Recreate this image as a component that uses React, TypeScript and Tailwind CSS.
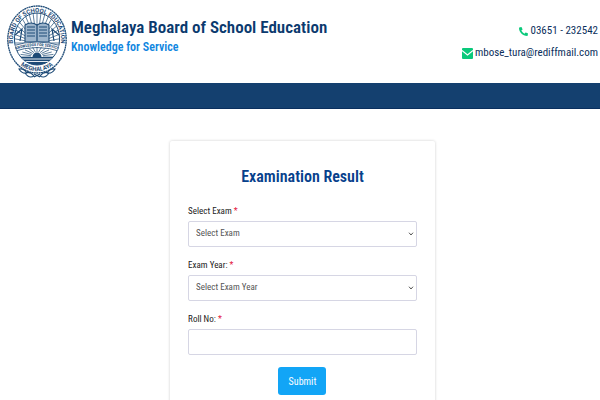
import React from "react";
import { FaPhoneAlt } from "react-icons/fa";

const INK = "#1d4a76";

const rays = Array.from({ length: 21 }, (_, i) => Math.PI + (i * Math.PI) / 20);
const sunRays = Array.from({ length: 13 }, (_, i) => Math.PI + (i * Math.PI) / 12);

const Seal = () => {
  return (
    <svg
      viewBox="0 0 60 73"
      className="h-[73px] w-[60px] shrink-0"
      fill="none"
      stroke={INK}
      role="img"
      aria-label="Board seal"
    >
      <defs>
        <path id="ring-top" d="M8 46 A24 27.6 0 1 1 52 46" />
        <path id="ring-bottom" d="M5 48.5 A28 32 0 0 0 55 48.5" />
        <path id="ribbon" d="M8 45 Q30 37 52 45" />
        <clipPath id="inner">
          <ellipse cx="30" cy="34" rx="22.5" ry="26" />
        </clipPath>
      </defs>
      <ellipse cx="30" cy="34.5" rx="29.2" ry="33.5" strokeWidth="1.3" strokeDasharray="2 .4" />
      <ellipse cx="30" cy="34" rx="22.6" ry="26" strokeWidth="1" />
      <g clipPath="url(#inner)">
        {rays.map((a) => (
          <path
            key={a}
            strokeWidth=".7"
            d={`M${30 + 12 * Math.cos(a)} ${38 + 14 * Math.sin(a)} L${30 + 26 * Math.cos(a)} ${38 + 31 * Math.sin(a)}`}
          />
        ))}
        <path d="M8 30 L15 24 L13 36 M52 30 L45 24 L47 36" strokeWidth="1.2" />
        <path d="M18 20 Q24 16 30 20 Q36 16 42 20 V37 H18 Z" fill="#9db5cc" strokeWidth="1.1" />
        <path d="M30 20 V36" strokeWidth="1.2" />
        <path
          d="M20 22 h8 M20 25 h8 M20 28 h8 M20 31 h8 M32 22 h8 M32 25 h8 M32 28 h8 M32 31 h8"
          strokeWidth="1"
        />
        <path d="M5 41 Q30 33 55 41 V47 Q30 38 5 47 Z" fill="#fff" strokeWidth=".8" />
        {sunRays.map((a) => (
          <path
            key={a}
            strokeWidth=".7"
            d={`M${30 + 6 * Math.cos(a)} ${52 + 5 * Math.sin(a)} L${30 + 17 * Math.cos(a)} ${52 + 10 * Math.sin(a)}`}
          />
        ))}
        <path d="M25.5 52 A4.5 4.5 0 0 1 34.5 52 Z" fill={INK} stroke="none" />
        <path d="M5 52 H55 V64 H5 Z" fill={INK} stroke="none" />
        <path d="M13 54 h34 M17 56.5 h26" stroke="#fff" strokeWidth=".9" />
      </g>
      <path
        d="M12 64 q5 -1 8 4 q-5 1 -8 -4 Z M48 64 q-5 -1 -8 4 q5 1 8 -4 Z M18 68 q5 -2 9 3 q-5 3 -9 -3 Z M42 68 q-5 -2 -9 3 q5 3 9 -3 Z M27 69 l6 3 M33 69 l-6 3"
        strokeWidth="1.1"
      />
      <g
        fill={INK}
        stroke="none"
        fontFamily="Roboto, sans-serif"
        fontWeight="700"
        textAnchor="middle"
      >
        <text fontSize="6">
          <textPath href="#ring-top" startOffset="50%">
            BOARD OF SCHOOL EDUCATION
          </textPath>
        </text>
        <text fontSize="4" fontFamily="'Roboto Condensed', Roboto, sans-serif">
          <textPath href="#ribbon" startOffset="50%">
            KNOWLEDGE FOR SERVICE
          </textPath>
        </text>
        <text fontSize="6">
          <textPath href="#ring-bottom" startOffset="50%">
            MEGHALAYA
          </textPath>
        </text>
      </g>
    </svg>
  );
};

const MailIcon = () => {
  return (
    <svg viewBox="0 0 11 11" className="size-[11px]" aria-hidden="true">
      <rect width="11" height="11" rx="1" fill="#0ac97b" />
      <path d="M0 2.5 L5.5 7 L11 2.5" fill="none" stroke="#fff" strokeWidth="1.1" />
    </svg>
  );
};

type FieldProps = {
  id: string;
  label: string;
  children: React.ReactNode;
};

const Field = ({ id, label, children }: FieldProps) => {
  return (
    <div className="flex flex-col gap-1">
      <label htmlFor={id} className="text-[9px] leading-3 text-[#222]">
        {label} <span className="text-[#e3173e]">*</span>
      </label>
      {children}
    </div>
  );
};

const SelectBox = ({ id, placeholder }: { id: string; placeholder: string }) => {
  return (
    <div className="grid items-center">
      <select
        id={id}
        className="col-start-1 row-start-1 h-[26px] w-full appearance-none rounded-xs border border-[#d6d6e4] bg-white px-[7px] text-[9px] text-[#555]"
      >
        <option>{placeholder}</option>
      </select>
      <svg
        viewBox="0 0 6 4"
        className="pointer-events-none col-start-1 row-start-1 mr-[3px] h-1 w-[6px] justify-self-end"
        fill="none"
        stroke="#555"
        strokeWidth="1"
      >
        <path d="M1 .7 L3 3 L5 .7" />
      </svg>
    </div>
  );
};

const App = () => {
  return (
    <div className="min-h-screen bg-white font-['Roboto_Condensed',Roboto,sans-serif]">
      <header className="flex items-start justify-between pt-[5px] pr-[2px] pb-[5px] pl-[7px]">
        <div className="flex gap-1">
          <Seal />
          <div className="pt-3">
            <h1 className="text-[17px] leading-5 font-semibold text-[#0b3a6e]">
              Meghalaya Board of School Education
            </h1>
            <p className="text-[12px] leading-5 font-semibold text-[#0f86e0]">
              Knowledge for Service
            </p>
          </div>
        </div>
        <div className="flex flex-col items-end gap-[6px] pt-[18px] text-[11px] leading-4 text-[#0b2f5c]">
          <a href="tel:03651232542" className="flex items-center gap-[2px]">
            <FaPhoneAlt className="size-[9px] text-[#0ac97b]" />
            03651 - 232542
          </a>
          <a href="mailto:mbose_tura@rediffmail.com" className="flex items-center gap-[2px]">
            <MailIcon />
            mbose_tura@rediffmail.com
          </a>
        </div>
      </header>
      <nav className="h-[26px] border-b border-[#0a2f5e] bg-[#14406f]" />
      <main className="flex justify-center pt-8 pl-[5px]">
        <form
          className="flex w-[44.5%] flex-col gap-3 rounded-xs px-[18px] pt-6 pb-6 shadow-[0_0_3px_rgba(0,0,0,0.2)]"
          onSubmit={(e) => e.preventDefault()}
        >
          <h2 className="mb-1 text-center text-[16px] leading-6 font-semibold text-[#07418c]">
            Examination Result
          </h2>
          <Field id="exam" label="Select Exam">
            <SelectBox id="exam" placeholder="Select Exam" />
          </Field>
          <Field id="year" label="Exam Year:">
            <SelectBox id="year" placeholder="Select Exam Year" />
          </Field>
          <Field id="roll" label="Roll No:">
            <input
              id="roll"
              type="text"
              className="h-[26px] w-full rounded-xs border border-[#d6d6e4] bg-white px-[7px] text-[9px] text-[#555]"
            />
          </Field>
          <button
            type="submit"
            className="h-7 w-12 self-center rounded-[3px] bg-[#12a5f6] text-[10px] text-white"
          >
            Submit
          </button>
        </form>
      </main>
    </div>
  );
};

export default App;
